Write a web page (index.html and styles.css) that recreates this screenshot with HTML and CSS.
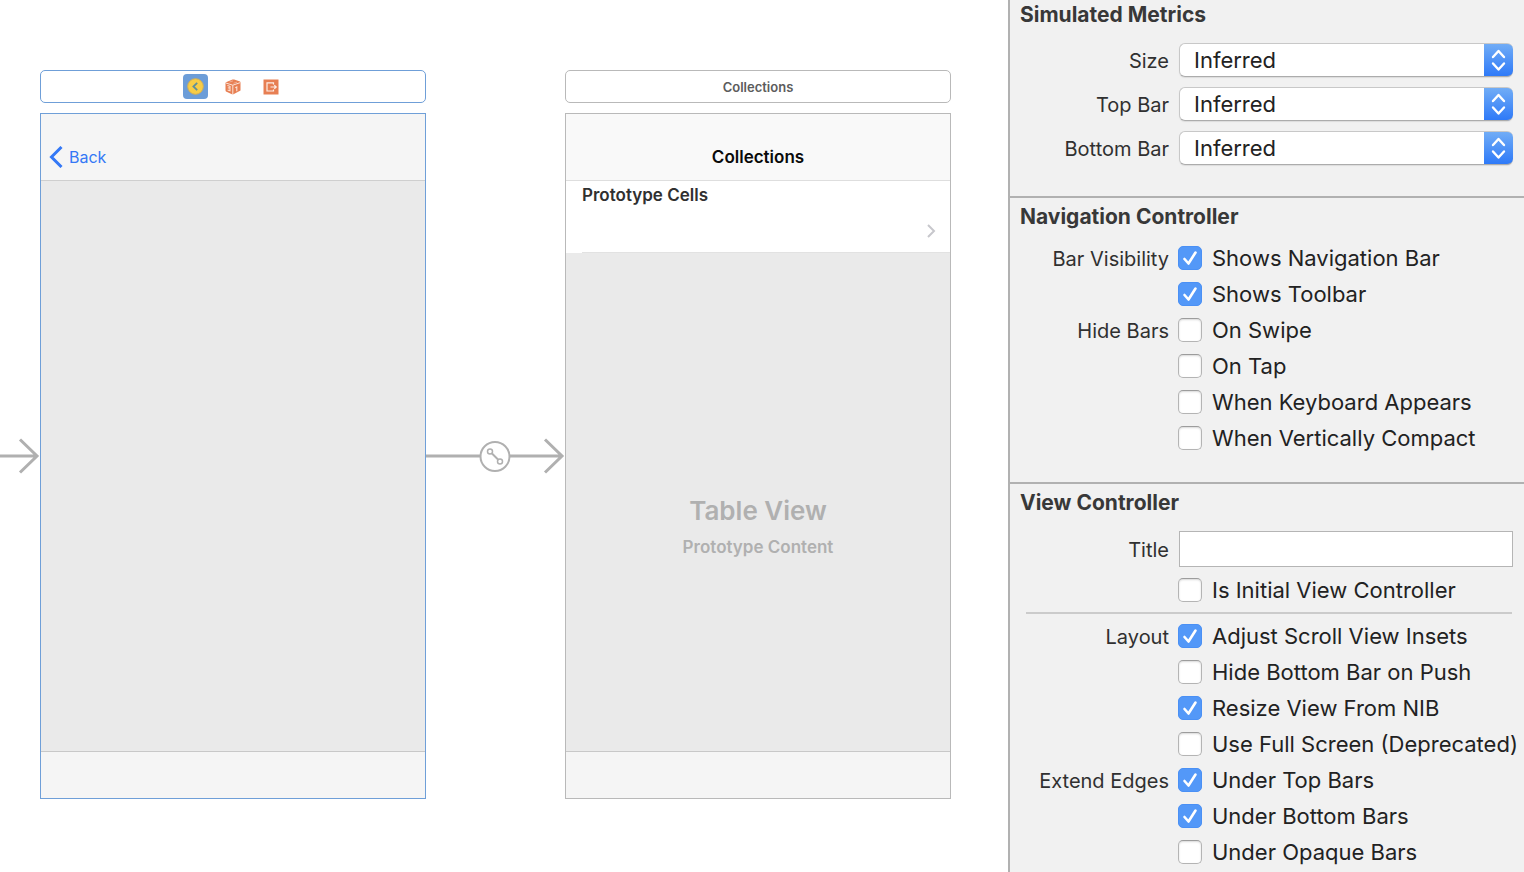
FILE: index.html
```html
<!DOCTYPE html>
<html lang="en">
<head>
<meta charset="utf-8">
<title>Storyboard</title>
<link rel="stylesheet" href="styles.css">
</head>
<body>
<main class="canvas">
  <svg class="entry" width="40" height="36" viewBox="0 0 40 36" fill="none" stroke="#b0b0b0" stroke-width="3" aria-hidden="true">
    <path d="M0 18H37M20 1.500L37 18L20 34.500"/>
  </svg>

  <section class="scene selected">
    <header class="dock">
      <button class="dock-item active" aria-label="Navigation Controller">
        <svg width="17" height="17" viewBox="0 0 17 17" fill="none">
          <circle cx="8.500" cy="8.500" r="7.800" fill="#f8cd46" stroke="#d3b055"/>
          <path d="M10.200 4.800L6.400 8.500L10.200 12.200" stroke="#5f8f9c" stroke-width="1.800"/>
        </svg>
      </button>
      <button class="dock-item" aria-label="First Responder">
        <svg width="16" height="16" viewBox="0 0 16 16">
          <path d="M1 3.200L7.500 .5Q8.300 .3 9.200 .5L15 2.600Q15.500 2.900 15.500 3.500V11.500L8.500 15.200Q7.800 15.500 7 15.200L1.500 12.800Q.5 12.300 .5 11.300V4Z" fill="#e77f53"/>
          <path d="M.8 4L7.800 6.200L15.300 3.600M7.800 6.200V15.300" fill="none" stroke="#fbe3d8" stroke-width="1"/>
          <path d="M4.500 3L8 1.900M8.500 4.300L12 3.200" fill="none" stroke="#f3b89e" stroke-width=".8"/>
          <path d="M2.400 6.500L5 7.300V9.300L2.800 8.800M5 9.300V11.800L2.600 11M10.300 8.800L11.800 8V12.300" fill="none" stroke="#fbe3d8" stroke-width="1.100"/>
        </svg>
      </button>
      <button class="dock-item" aria-label="Exit">
        <svg width="16" height="16" viewBox="0 0 16 16" fill="none">
          <path d="M.5 .5H15.500V15.500H.5Z" fill="#e77f53"/>
          <path d="M10.500 5.500V3.900H4V12H10.500V10.500M7.500 8H13.200M11.300 6.300L13.200 8L11.300 9.700" stroke="#fdeee7" stroke-width="1.200"/>
        </svg>
      </button>
    </header>
    <div class="device">
      <div class="navbar">
        <button class="back">
          <svg width="14" height="22" viewBox="0 0 14 22" fill="none" stroke="#3478f6" stroke-width="3"><path d="M12.500 1L2.500 11L12.500 21"/></svg>
          Back
        </button>
      </div>
      <div class="content"></div>
      <div class="toolbar"></div>
    </div>
  </section>

  <svg class="segue" viewBox="0 0 139 36" fill="none" stroke="#b0b0b0" stroke-width="3" aria-hidden="true">
    <path d="M0 18H54M84 18H136M119 1.500L136 18L119 34.500"/>
    <circle cx="69" cy="18.500" r="14.500" stroke-width="2"/>
    <g stroke-width="1.500"><circle cx="64" cy="13.500" r="2.500"/><circle cx="74" cy="23.500" r="2.500"/></g>
    <path d="M66 15.500L72 21.500" stroke-width="2"/>
  </svg>

  <section class="scene">
    <header class="dock dock-title">Collections</header>
    <div class="device">
      <div class="navbar navbar-light"><h1 class="nav-title">Collections</h1></div>
      <div class="cells">
        <h2 class="cells-title">Prototype Cells</h2>
        <div class="cell">
          <svg width="10" height="14" viewBox="0 0 10 14" fill="none" stroke="#c7c7cc" stroke-width="2"><path d="M2 1L8 7L2 13"/></svg>
        </div>
      </div>
      <div class="content placeholder">
        <p class="placeholder-title">Table View</p>
        <p class="placeholder-text">Prototype Content</p>
      </div>
      <div class="toolbar"></div>
    </div>
  </section>
</main>

<aside class="inspector">
  <section class="group group-first">
    <h2 class="group-title">Simulated Metrics</h2>
    <div class="row row-popup">
      <label class="name" for="size">Size</label>
      <select class="popup" id="size"><option>Inferred</option></select>
    </div>
    <div class="row row-popup">
      <label class="name" for="topbar">Top Bar</label>
      <select class="popup" id="topbar"><option>Inferred</option></select>
    </div>
    <div class="row row-popup">
      <label class="name" for="bottombar">Bottom Bar</label>
      <select class="popup" id="bottombar"><option>Inferred</option></select>
    </div>
  </section>

  <section class="group">
    <h2 class="group-title">Navigation Controller</h2>
    <div class="row"><span class="name">Bar Visibility</span><label class="option"><input class="check" type="checkbox" checked>Shows Navigation Bar</label></div>
    <div class="row"><label class="option"><input class="check" type="checkbox" checked>Shows Toolbar</label></div>
    <div class="row"><span class="name">Hide Bars</span><label class="option"><input class="check" type="checkbox">On Swipe</label></div>
    <div class="row"><label class="option"><input class="check" type="checkbox">On Tap</label></div>
    <div class="row"><label class="option"><input class="check" type="checkbox">When Keyboard Appears</label></div>
    <div class="row"><label class="option"><input class="check" type="checkbox">When Vertically Compact</label></div>
  </section>

  <section class="group">
    <h2 class="group-title">View Controller</h2>
    <div class="row row-field">
      <label class="name" for="title">Title</label>
      <input class="field" id="title" type="text">
    </div>
    <div class="row"><label class="option"><input class="check" type="checkbox">Is Initial View Controller</label></div>
    <hr class="rule">
    <div class="row"><span class="name">Layout</span><label class="option"><input class="check" type="checkbox" checked>Adjust Scroll View Insets</label></div>
    <div class="row"><label class="option"><input class="check" type="checkbox">Hide Bottom Bar on Push</label></div>
    <div class="row"><label class="option"><input class="check" type="checkbox" checked>Resize View From NIB</label></div>
    <div class="row"><label class="option"><input class="check" type="checkbox">Use Full Screen (Deprecated)</label></div>
    <div class="row"><span class="name">Extend Edges</span><label class="option"><input class="check" type="checkbox" checked>Under Top Bars</label></div>
    <div class="row"><label class="option"><input class="check" type="checkbox" checked>Under Bottom Bars</label></div>
    <div class="row"><label class="option"><input class="check" type="checkbox">Under Opaque Bars</label></div>
  </section>
</aside>
</body>
</html>
```
FILE: styles.css
```css
* { box-sizing: border-box; }

body {
  margin: 0;
  min-height: 100vh;
  display: flex;
  background: #fff;
  color: #222;
  font-family: Inter, "Liberation Sans", sans-serif;
}

h1, h2, p { margin: 0; }

button {
  border: 0;
  padding: 0;
  background: none;
  font: inherit;
  color: inherit;
}

/* Canvas */
.canvas {
  flex: 1;
  display: flex;
  padding: 70px 57px 73px 0;
}

.entry, .segue {
  flex: none;
  height: 36px;
  margin-top: 368px;
}

.segue { width: 139px; }

.scene {
  --edge: #b9b9b9;
  flex: 1;
  min-width: 0;
  display: flex;
  flex-direction: column;
  gap: 10px;
}

.scene.selected { --edge: #6f9fd8; }

.dock {
  height: 33px;
  display: flex;
  align-items: center;
  justify-content: center;
  gap: 13px;
  border: 1px solid var(--edge);
  border-radius: 5px;
}

.dock-title {
  font-size: 13px;
  line-height: 18px;
  font-weight: 600;
  color: #5c5c5c;
}

.dock-item {
  width: 25px;
  height: 25px;
  display: grid;
  place-items: center;
  border-radius: 4px;
}

.dock-item.active { background: #6c9dd8; }

.device {
  flex: 1;
  display: flex;
  flex-direction: column;
  border: 1px solid var(--edge);
}

.navbar {
  height: 67px;
  display: flex;
  align-items: flex-end;
  padding: 0 8px 12px;
  background: #f5f5f5;
  border-bottom: 1px solid #cfcfcf;
}

.navbar-light {
  justify-content: center;
  background: #f9f9f9;
  border-bottom-color: #dedede;
}

.back {
  display: flex;
  align-items: center;
  gap: 6px;
  font-size: 16px;
  line-height: 22px;
  color: #3478f6;
}

.nav-title {
  font-size: 17px;
  line-height: 22px;
  font-weight: 600;
  color: #0a0a0a;
}

.cells {
  padding-left: 16px;
  background: #fff;
}

.cells-title {
  font-size: 17px;
  line-height: 28px;
  font-weight: 600;
  color: #303030;
}

.cell {
  height: 44px;
  display: flex;
  align-items: center;
  justify-content: flex-end;
  padding-right: 14px;
  border-bottom: 1px solid #e2e2e2;
}

.content {
  flex: 1;
  background: #eaeaea;
}

.placeholder {
  display: flex;
  flex-direction: column;
  align-items: center;
  justify-content: center;
  gap: 4px;
  padding-top: 50px;
  color: #b0b0b0;
}

.placeholder-title {
  font-size: 26px;
  line-height: 36px;
  font-weight: 600;
}

.placeholder-text {
  font-size: 17px;
  line-height: 28px;
  font-weight: 600;
}

.toolbar {
  height: 47px;
  background: #f5f5f5;
  border-top: 1px solid #c8c8c8;
}

/* Inspector */
.inspector {
  flex: none;
  width: 516px;
  background: #f1f1f1;
  border-left: 2px solid #b1b1b1;
}

.group {
  padding: 4px 11px 26px 10px;
  border-top: 2px solid #b1b1b1;
}

.group:last-child { padding-bottom: 2px; }

.group-first {
  padding-top: 0;
  border-top: 0;
}

.group-title {
  margin-bottom: 8px;
  font-size: 21px;
  line-height: 30px;
  font-weight: 700;
  color: #383838;
}

.row {
  display: grid;
  grid-template-columns: 149px 1fr;
  column-gap: 9px;
  align-items: center;
  height: 36px;
}

.row-popup { height: 44px; }
.row-field { height: 46px; }

.name {
  padding-top: 2px;
  font-size: 20px;
  line-height: 30px;
  text-align: right;
  color: #303030;
}

.option {
  grid-column: 2;
  display: flex;
  align-items: center;
  gap: 10px;
  font-size: 22px;
  line-height: 30px;
  white-space: nowrap;
}

.check {
  appearance: none;
  flex: none;
  width: 24px;
  height: 24px;
  margin: 0;
  border: 1px solid #b4b4b4;
  border-top-color: #9c9c9c;
  border-radius: 5px;
  background: #fff;
  box-shadow: inset 0 1px 2px #d8d8d8;
}

.check:checked {
  border-color: #4a90f5;
  box-shadow: none;
  background: #5398f8 url("data:image/svg+xml,%3Csvg xmlns='http://www.w3.org/2000/svg' viewBox='0 0 22 22' fill='none' stroke='white' stroke-width='2.600' stroke-linecap='round' stroke-linejoin='round'%3E%3Cpath d='M5.500 12L9.500 16.500L16.500 5.500'/%3E%3C/svg%3E") center / 22px 22px no-repeat;
}

.popup, .field {
  min-width: 0;
  margin: 0 0 0 1px;
  font: inherit;
  font-size: 22px;
  color: #222;
}

.popup {
  appearance: none;
  height: 34px;
  padding: 0 40px 0 14px;
  border: 1px solid #c8c8c8;
  border-right: 0;
  border-bottom-color: #acacac;
  border-radius: 6px;
  background:
    url("data:image/svg+xml,%3Csvg xmlns='http://www.w3.org/2000/svg' viewBox='0 0 29 34' fill='none' stroke='white' stroke-width='2.400' stroke-linecap='round' stroke-linejoin='round'%3E%3Cpath d='M9 14L14.500 8L20 14M9 20.500L14.500 26.500L20 20.500'/%3E%3C/svg%3E") right center / 29px 34px no-repeat border-box,
    linear-gradient(#73aef6, #2c78f8) right center / 29px 34px no-repeat border-box,
    #fff;
  box-shadow: 0 1px 1px #dcdcdc;
}

.field {
  height: 36px;
  padding: 0 8px;
  border: 1px solid #b5b5b5;
  border-radius: 0;
  background: #fff;
}

.rule {
  height: 2px;
  margin: 4px 1px 4px 6px;
  border: 0;
  background: #cbcbcb;
}
```
